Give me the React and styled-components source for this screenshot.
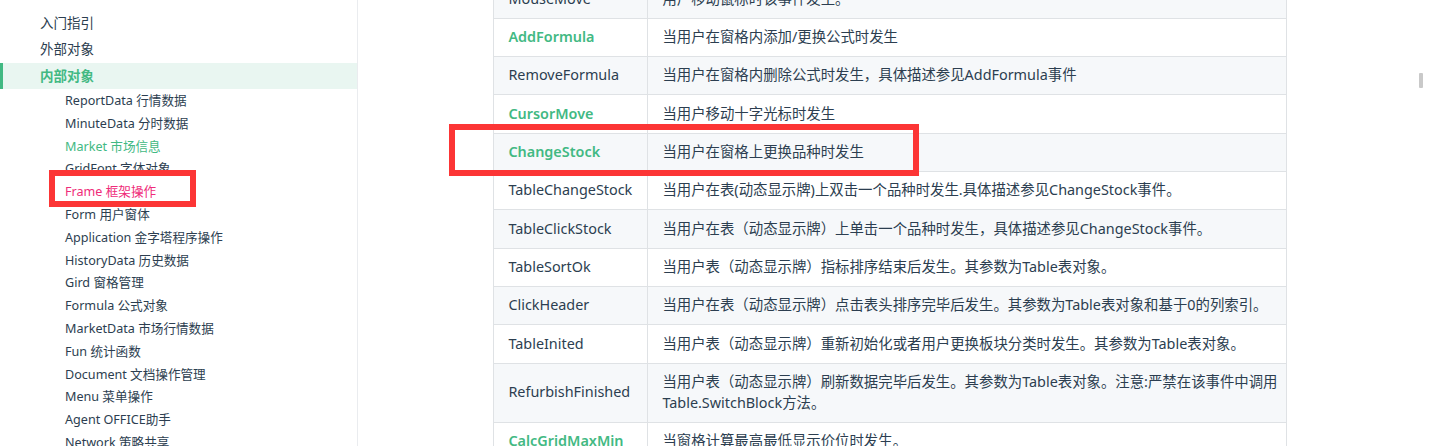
import React from "react";
import styled, { createGlobalStyle, css } from "styled-components";

const GlobalStyle = createGlobalStyle`
  html, body {
    margin: 0;
    padding: 0;
    background: #ffffff;
  }
  body {
    font-family: "Noto Sans", "Noto Sans CJK SC", sans-serif;
    color: #2c3e50;
  }
  #root {
    height: 446px;
    overflow: hidden;
  }
`;

const Page = styled.div`
  position: relative;
  display: flex;
  height: 446px;
  overflow: hidden;
`;

const Sidebar = styled.aside`
  flex: 0 0 358px;
  height: 100%;
  border-right: 1px solid #eaecef;
  box-sizing: border-box;
  padding-top: 9.5px;
  overflow: hidden;
`;

const NavList = styled.ul`
  list-style: none;
  margin: 0;
  padding: 0;
`;

const TopItem = styled.li`
  height: 26.5px;
  line-height: 27px;
  font-size: 13.5px;
  padding-left: 40px;
  color: #2c3e50;
  white-space: nowrap;
  ${(p) =>
    p.$active &&
    css`
      padding-left: 37px;
      border-left: 3px solid #42b983;
      background: #e9f6f1;
      color: #42b983;
      font-weight: 700;
    `}
`;

const SubList = styled.ul`
  list-style: none;
  margin: 0;
  padding: 0;
`;

const toneColor = {
  normal: "#2c3e50",
  visited: "#42b983",
  marked: "#ef2c79",
};

const SubItem = styled.li`
  position: relative;
  height: 22.8px;
  line-height: 23px;
  font-size: 12.6px;
  padding-left: 65px;
  white-space: nowrap;
  color: ${(p) => toneColor[p.$tone || "normal"]};
`;

const MarkBox = styled.span`
  position: absolute;
  border: 6.5px solid #fc3535;
  box-sizing: border-box;
  pointer-events: none;
  ${(p) => css`
    left: ${p.$left}px;
    top: ${p.$top}px;
    width: ${p.$w}px;
    height: ${p.$h}px;
  `}
`;

const Content = styled.main`
  flex: 1;
  padding-left: 135px;
  overflow: hidden;
`;

const Table = styled.table`
  margin-top: -20.5px;
  width: 794px;
  table-layout: fixed;
  border-collapse: collapse;
  font-size: 14.4px;
  line-height: 20.67px;
`;

const Col = styled.col`
  width: ${(p) => p.$w};
`;

const Row = styled.tr`
  background: ${(p) => (p.$striped ? "#f6f8fa" : "#ffffff")};
`;

const Cell = styled.td`
  position: relative;
  border: 1px solid #dfe2e5;
  padding: 8.33px 14.4px;
  vertical-align: middle;
  color: #2c3e50;
`;

const NameCell = styled(Cell)`
  white-space: nowrap;
  ${(p) =>
    p.$link &&
    css`
      color: #42b983;
      font-weight: 600;
    `}
`;

const Line = styled.span`
  display: block;
  white-space: nowrap;
`;

const ScrollThumb = styled.div`
  position: absolute;
  left: 1419px;
  top: 73px;
  width: 4px;
  height: 15px;
  border-radius: 1px;
  background: #c9c9c9;
`;

const subItems = [
  ["ReportData 行情数据"],
  ["MinuteData 分时数据"],
  ["Market 市场信息", "visited"],
  ["GridFont 字体对象"],
  ["Frame 框架操作", "marked", true],
  ["Form 用户窗体"],
  ["Application 金字塔程序操作"],
  ["HistoryData 历史数据"],
  ["Gird 窗格管理"],
  ["Formula 公式对象"],
  ["MarketData 市场行情数据"],
  ["Fun 统计函数"],
  ["Document 文档操作管理"],
  ["Menu 菜单操作"],
  ["Agent OFFICE助手"],
  ["Network 策略共享"],
];

const events = [
  { name: "MouseMove", desc: ["用户移动鼠标时该事件发生。"] },
  { name: "AddFormula", link: true, desc: ["当用户在窗格内添加/更换公式时发生"] },
  { name: "RemoveFormula", desc: ["当用户在窗格内删除公式时发生，具体描述参见AddFormula事件"] },
  { name: "CursorMove", link: true, desc: ["当用户移动十字光标时发生"] },
  { name: "ChangeStock", link: true, mark: true, desc: ["当用户在窗格上更换品种时发生"] },
  { name: "TableChangeStock", desc: ["当用户在表(动态显示牌)上双击一个品种时发生.具体描述参见ChangeStock事件。"] },
  { name: "TableClickStock", desc: ["当用户在表（动态显示牌）上单击一个品种时发生，具体描述参见ChangeStock事件。"] },
  { name: "TableSortOk", desc: ["当用户表（动态显示牌）指标排序结束后发生。其参数为Table表对象。"] },
  { name: "ClickHeader", desc: ["当用户在表（动态显示牌）点击表头排序完毕后发生。其参数为Table表对象和基于0的列索引。"] },
  { name: "TableInited", desc: ["当用户表（动态显示牌）重新初始化或者用户更换板块分类时发生。其参数为Table表对象。"] },
  {
    name: "RefurbishFinished",
    desc: ["当用户表（动态显示牌）刷新数据完毕后发生。其参数为Table表对象。注意:严禁在该事件中调用", "Table.SwitchBlock方法。"],
  },
  { name: "CalcGridMaxMin", link: true, desc: ["当窗格计算最高最低显示价位时发生。"] },
];

export default function App() {
  return (
    <>
      <GlobalStyle />
      <Page>
        <Sidebar>
          <NavList>
            <TopItem>入门指引</TopItem>
            <TopItem>外部对象</TopItem>
            <TopItem $active>内部对象</TopItem>
            <li>
              <SubList>
                {subItems.map(([label, tone, marked]) => (
                  <SubItem key={label} $tone={tone}>
                    {label}
                    {marked && <MarkBox $left={49} $top={-10} $w={147} $h={37} />}
                  </SubItem>
                ))}
              </SubList>
            </li>
          </NavList>
        </Sidebar>
        <Content>
          <Table>
            <colgroup>
              <Col $w="154px" />
              <Col $w="auto" />
            </colgroup>
            <tbody>
              {events.map((ev, i) => (
                <Row key={ev.name} $striped={i % 2 === 0}>
                  <NameCell $link={ev.link}>
                    {ev.name}
                    {ev.mark && <MarkBox $left={-45} $top={-10} $w={470} $h={52} />}
                  </NameCell>
                  <Cell>
                    {ev.desc.map((line) => (
                      <Line key={line}>{line}</Line>
                    ))}
                  </Cell>
                </Row>
              ))}
            </tbody>
          </Table>
        </Content>
        <ScrollThumb />
      </Page>
    </>
  );
}
